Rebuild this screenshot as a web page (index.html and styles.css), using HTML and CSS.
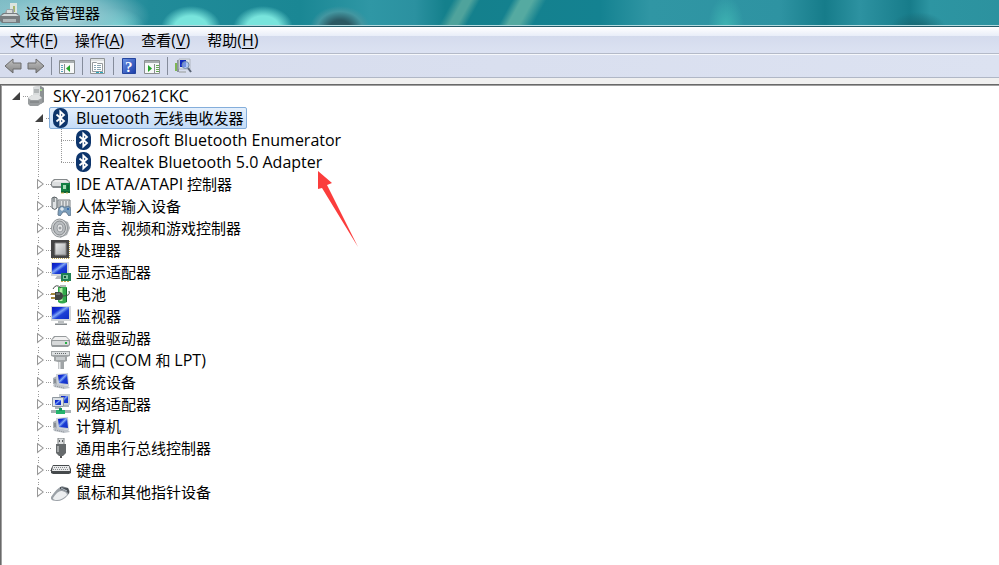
FILE: index.html
```html
<!DOCTYPE html>
<html lang="zh-CN">
<head>
<meta charset="utf-8">
<title>设备管理器</title>
<link rel="stylesheet" href="styles.css">
</head>
<body>
<svg class="sprite" aria-hidden="true">
  <defs>
    <linearGradient id="screen" x1="0" y1="0" x2="1" y2="1"><stop offset="0" stop-color="#0716b8"/><stop offset=".3" stop-color="#1534d8"/><stop offset=".45" stop-color="#7fa4f4"/><stop offset=".6" stop-color="#1c3fd6"/><stop offset="1" stop-color="#0f2bc4"/></linearGradient>
    <linearGradient id="metal" x1="0" y1="0" x2="1" y2="1"><stop offset="0" stop-color="#f0f1f1"/><stop offset="1" stop-color="#a4a7a9"/></linearGradient>
    <linearGradient id="arrow" x1="0" y1="0" x2="0" y2="1"><stop offset="0" stop-color="#c2c2c2"/><stop offset="1" stop-color="#848484"/></linearGradient>
    <linearGradient id="help" x1="0" y1="0" x2="1" y2="1"><stop offset="0" stop-color="#6d94e6"/><stop offset="1" stop-color="#1b3ca8"/></linearGradient>
    <symbol id="i-bt" viewBox="0 0 20 20"><rect x="2" y="0" width="15" height="20" rx="7" fill="#0d356c"/><path d="M5.500 6.500 13 13l-3.700 3.500v-13L13 7l-7.500 6.500" fill="none" stroke="#fff" stroke-width="1.800"/></symbol>
    <symbol id="i-pc" viewBox="0 0 20 20"><path d="M5 1l8-1 3 2v14l-3 2H6z" fill="#a9adaf"/><path d="M5 1l7-1v13H5z" fill="#d9dcdd"/><path d="M12 0l4 2v14l-4 2z" fill="#8c9193"/><path d="M6 4h5M6 6h5" stroke="#8b9092"/><circle cx="13" cy="4" r="1" fill="#aeea8a"/><path d="M0 12l4-3h7l3 3v5l-4 3H2l-2-2z" fill="#999d9f"/><path d="M0 12l4-3h7l3 3-4 2H3z" fill="#e1e3e4"/><path d="M2 16h9" stroke="#777b7d"/></symbol>
    <symbol id="i-ide" viewBox="0 0 20 20"><path d="M0 8l3-3h13l3 3v4l-2 2H2l-2-2z" fill="#85898b"/><path d="M1 8l3-2h11l3 2z" fill="#ececec"/><rect x="1" y="8" width="17" height="4" rx="1" fill="#dcdedf"/><path d="M10 9h9v10h-9z" fill="#158044"/><path d="M12 11h3v4h-3z" fill="#a5ddb5"/><path d="M10 18h9M17 11v5" stroke="#0b4f27"/><path d="M10 19h3m2 0h2" stroke="#d1b64f"/></symbol>
    <symbol id="i-hid" viewBox="0 0 20 20"><path d="M1 2q2-2 5 0v10q-2 3-5 0z" fill="#e0e3e4" stroke="#596064"/><path d="M3 1v5" stroke="#4f565a"/><path d="M7 4h12v8H7z" fill="#e2e4e6" stroke="#777c80"/><path d="M8 6h10M8 8h10M8 10h10" stroke="#777c80" stroke-dasharray="2 1"/><path d="M7 19q0-9 4-9l2 1h2l2-1q4 1 3 9l-2 1-3-4h-3l-3 4z" fill="#7b9ebc" stroke="#657b90"/><path d="M9 13h4m-2-2v4" stroke="#fff"/><circle cx="17" cy="13" r="1" fill="#275eae"/></symbol>
    <symbol id="i-sound" viewBox="0 0 20 20"><path d="M10 1l7 3 2 6-3 7-7 3z" fill="#aeb2b5"/><ellipse cx="8.500" cy="10" rx="8" ry="9" fill="#d4d6d8" stroke="#909598"/><ellipse cx="8.500" cy="10" rx="6" ry="7" fill="#b9bdc0" stroke="#85898c"/><ellipse cx="9" cy="10" rx="3" ry="4" fill="#e6e7e8" stroke="#989ca0"/><circle cx="9" cy="10" r="1.500" fill="#9a9fa3"/></symbol>
    <symbol id="i-cpu" viewBox="0 0 20 20"><path d="M0 0h18v18H0z" fill="#454545"/><path d="M1 18.500h18M18.500 1v17" stroke="#bba554" stroke-dasharray="1 1"/><path d="M4 3h11v12H4z" fill="url(#metal)" stroke="#8a8a8a"/></symbol>
    <symbol id="i-monitor" viewBox="0 0 20 20"><path d="M0 0h20v15H0z" fill="#d3d6d8"/><path d="M1 1h17v12H1z" fill="url(#screen)"/><path d="M7 15h6v2h3v2H4v-2h3z" fill="#bbbfc1"/><path d="M4 18.500h12" stroke="#858a8d"/></symbol>
    <symbol id="i-display" viewBox="0 0 20 20"><path d="M0 0h18v14H0z" fill="#d3d6d8"/><path d="M1 1h15v11H1z" fill="url(#screen)"/><path d="M6 14h5v3H4z" fill="#b7babd"/><path d="M10 11h10v8H10z" fill="#208055"/><path d="M12 13h5v4h-5z" fill="#80c8a2"/><path d="M13 14h2v2h-2z" fill="#15533c"/><path d="M10 19.500h9" stroke="#caac50" stroke-dasharray="2 1"/></symbol>
    <symbol id="i-battery" viewBox="0 0 20 20"><path d="M7 3h9v15q-5 3-9 0z" fill="#33a94b"/><path d="M10 4v13" stroke="#b5f1a5" stroke-width="3"/><path d="M9 2h6" stroke="#b4b9b7" stroke-width="2"/><path d="M15.500 4v14" stroke="#126a27"/><path d="M2 5q3-6 8-1M12 12q8 0 6-5" fill="none" stroke="#454b47"/><path d="M4 8h4q4 0 4 4t-4 4H4z" fill="#3f4442"/><path d="M5 10h4" stroke="#8f9491"/><path d="M0 10h4M0 14h4" stroke="#a3883e" stroke-width="2"/></symbol>
    <symbol id="i-disk" viewBox="0 0 20 20"><path d="M0 12l3-4h12l4 4v5l-2 2H1l-1-2z" fill="#969a9c"/><path d="M1 12l3-3h11l3 3z" fill="#f0f0f0"/><rect x="1" y="13" width="17" height="4" rx="1" fill="#d7d9da"/><path d="M14 14h2v2h-2z" fill="#23ae43"/></symbol>
    <symbol id="i-port" viewBox="0 0 20 20"><path d="M0 1h19v5l-3 1v4l-3 1v7H7v-7l-4-1V7L0 6z" fill="#a0a4a6"/><path d="M1 2h17v3H1z" fill="#dcdfe0"/><path d="M4 3.500h11" stroke="#62676a" stroke-dasharray="1 1"/><path d="M5 7h9v3H5z" fill="#c7cbcd"/><path d="M8.500 12v7" stroke="#e7e9ea" stroke-width="2"/></symbol>
    <symbol id="i-system" viewBox="0 0 20 20"><path d="M2 6l4-2v10l-4-2z" fill="#aab0b6"/><path d="M4 7v4" stroke="#676d73"/><path d="M5 2l12-1 1 13-12-2z" fill="#cbd0d6"/><path d="M7 3l9-1 1 10-9-1z" fill="url(#screen)"/><path d="M2 13l5-1 10 2 2 2-6 1-10-2z" fill="#c0c5cb"/><path d="M4 14l9 2" stroke="#8d9298" stroke-dasharray="1 1"/></symbol>
    <symbol id="i-net" viewBox="0 0 20 20"><path d="M8 0h11v11H8z" fill="#c5cbd2"/><path d="M10 2h7v7h-7z" fill="url(#screen)"/><path d="M1.500 3.500h11v9h-11z" fill="#dce1e6" stroke="#90989f"/><path d="M4 6h6v5H4z" fill="url(#screen)"/><path d="M4 13h6v2H4zM13 11h5v2h-5z" fill="#aeb4bb"/><path d="M0 17.500h20" stroke="#a8b1b5" stroke-width="3"/><path d="M5 16h9v4H5z" fill="#25b36d"/><path d="M8 14h3v3H8z" fill="#19905a"/></symbol>
    <symbol id="i-usb" viewBox="0 0 20 20"><path d="M7 0h6v7H7z" fill="#dddfe0" stroke="#7d8183"/><path d="M8 3h1m2 0h1" stroke="#565a5c" stroke-width="2"/><path d="M5 6h10v9l-3 3H8l-3-3z" fill="#666a6c"/><path d="M7 8v6" stroke="#a4a7a8" stroke-width="2"/><path d="M10 18v2" stroke="#555" stroke-width="2"/></symbol>
    <symbol id="i-kbd" viewBox="0 0 20 20"><path d="M2 5h16l2 4v4l-2 1H2l-2-1V9z" fill="#464a4c"/><path d="M2 6h16l1 5H1z" fill="#e9eaeb"/><path d="M3 7.500h14M2 9.500h16" stroke="#85898c" stroke-dasharray="1 1"/></symbol>
    <symbol id="i-mouse" viewBox="0 0 20 20"><path d="M0 15Q6 6 11 4l6 2q3 4 0 7-5 6-11 6-7 0-6-4z" fill="#9ba1a7"/><path d="M2 16Q7 8 11 9q5 1 5 4-5 5-10 5-4 0-4-2z" fill="#eceef0"/><path d="M9 5l8 1q2 3 1 6-3-4-9-5z" fill="#4a5056"/><path d="M10 6l6 3" stroke="#bcc6d0"/></symbol>
    <symbol id="i-back" viewBox="0 0 18 18"><path d="M1 9l8-7v4h8v6H9v4z" fill="url(#arrow)" stroke="#6c6c6c"/></symbol>
    <symbol id="i-tree" viewBox="0 0 18 18"><path d="M1.500 3.500h15v13h-15z" fill="#f7f8f8" stroke="#8a8e90"/><path d="M2 5h14" stroke="#a8adaf" stroke-width="2"/><path d="M6.500 7v9" stroke="#8a8e90"/><path d="M3 8.500h2M3 10.500h2M3 12.500h2M3 14.500h2" stroke="#5ba0bc"/><path d="M12 8v7l-4-3.500z" fill="#24a52a"/></symbol>
    <symbol id="i-action" viewBox="0 0 18 18"><path d="M1.500 3.500h15v13h-15z" fill="#f7f8f8" stroke="#8a8e90"/><path d="M2 5h14" stroke="#a8adaf" stroke-width="2"/><path d="M11.500 7v9" stroke="#8a8e90"/><path d="M13 8.500h3M13 10.500h3M13 12.500h3M13 14.500h3" stroke="#65aa52"/><path d="M5 8v7l4-3.500z" fill="#24a52a"/></symbol>
    <symbol id="i-props" viewBox="0 0 18 18"><path d="M1.500 1.500h14v15h-14z" fill="#f6f7f7" stroke="#909496"/><path d="M2 3h13" stroke="#c5cacc"/><path d="M3.500 5.500h4l1 1h5v8h-10z" fill="#fff" stroke="#969a9d"/><path d="M5 8.500h2m1 0h4M5 10.500h2m1 0h4M5 12.500h2m1 0h4" stroke="#8aa5b2"/><path d="M7 15.500h3m1 0h3" stroke="#2aabc1"/></symbol>
    <symbol id="i-scan" viewBox="0 0 18 18"><path d="M1 6h2v8H1z" fill="#7eb653"/><path d="M3 3h2v12H3z" fill="#8c939c"/><path d="M5 2h11v10H5z" fill="#dde2e9" stroke="#b1b8c2"/><path d="M6 3h6v7H6z" fill="#112bbd"/><circle cx="11.500" cy="8" r="3.500" fill="#9dbcf5" fill-opacity=".7" stroke="#728dac"/><path d="M14 11l3 4" stroke="#596474" stroke-width="2"/><path d="M5 14h7v2H5z" fill="#b7bcc3"/></symbol>
  </defs>
</svg>

<header class="titlebar">
  <svg class="app-icon" viewBox="0 0 20 22" aria-hidden="true"><path d="M10 1h7v14h-7z" fill="#dce4df"/><path d="M13 4h2v6h-2z" fill="#a6b56c"/><path d="M4 12l3-5h7v5" fill="#9fa5a8"/><path d="M7 8h5v3H7z" fill="#d9dddd"/><path d="M0 14l3-3h14l3 3v7H2l-2-2z" fill="#777d80"/><path d="M1 14l3-2h12l3 2z" fill="#d3d8d9"/><path d="M3 17h13v3H3z" fill="#b1b7b9"/></svg>
  <h1 class="title">设备管理器</h1>
</header>

<nav class="menubar" aria-label="菜单">
  <button class="menu">文件<span class="latin">(<u>F</u>)</span></button>
  <button class="menu">操作<span class="latin">(<u>A</u>)</span></button>
  <button class="menu">查看<span class="latin">(<u>V</u>)</span></button>
  <button class="menu">帮助<span class="latin">(<u>H</u>)</span></button>
</nav>

<div class="toolbar" role="toolbar" aria-label="工具栏">
  <button class="tool" aria-label="后退"><svg><use href="#i-back"/></svg></button>
  <button class="tool" aria-label="前进"><svg class="flip"><use href="#i-back"/></svg></button>
  <span class="sep"></span>
  <button class="tool" aria-label="控制台树"><svg><use href="#i-tree"/></svg></button>
  <span class="sep"></span>
  <button class="tool" aria-label="属性"><svg><use href="#i-props"/></svg></button>
  <span class="sep"></span>
  <button class="tool" aria-label="帮助"><svg viewBox="0 0 18 18"><path d="M2.500 1.500h13v15h-13z" fill="url(#help)" stroke="#24459e"/><text class="help-mark" x="5" y="15">?</text></svg></button>
  <button class="tool" aria-label="操作窗格"><svg><use href="#i-action"/></svg></button>
  <span class="sep"></span>
  <button class="tool" aria-label="扫描检测硬件改动"><svg><use href="#i-scan"/></svg></button>
</div>

<main class="pane">
  <ul class="tree">
    <li>
      <div class="row"><button class="toggle open" aria-label="折叠"></button><span class="node"><svg><use href="#i-pc"/></svg><span class="latin">SKY-20170621CKC</span></span></div>
      <ul class="level">
        <li>
          <div class="row"><button class="toggle open" aria-label="折叠"></button><span class="node selected"><svg><use href="#i-bt"/></svg><span><span class="latin">Bluetooth</span> 无线电收发器</span></span></div>
          <ul class="level piped">
            <li class="row"><span class="branch"></span><span class="node"><svg><use href="#i-bt"/></svg><span class="latin">Microsoft Bluetooth Enumerator</span></span></li>
            <li class="row"><span class="branch last"></span><span class="node target"><svg><use href="#i-bt"/></svg><span class="latin">Realtek Bluetooth 5.0 Adapter</span>
              <svg class="pointer" viewBox="0 0 42 78" aria-hidden="true"><path d="M1 0l14 12-5 2 31 62L5 17l-4 1z" fill="#fb3d3c"/></svg></span></li>
          </ul>
        </li>
        <li class="row"><button class="toggle" aria-label="展开"></button><span class="node"><svg><use href="#i-ide"/></svg><span><span class="latin">IDE ATA/ATAPI</span> 控制器</span></span></li>
        <li class="row"><button class="toggle" aria-label="展开"></button><span class="node"><svg><use href="#i-hid"/></svg>人体学输入设备</span></li>
        <li class="row"><button class="toggle" aria-label="展开"></button><span class="node"><svg><use href="#i-sound"/></svg>声音、视频和游戏控制器</span></li>
        <li class="row"><button class="toggle" aria-label="展开"></button><span class="node"><svg><use href="#i-cpu"/></svg>处理器</span></li>
        <li class="row"><button class="toggle" aria-label="展开"></button><span class="node"><svg><use href="#i-display"/></svg>显示适配器</span></li>
        <li class="row"><button class="toggle" aria-label="展开"></button><span class="node"><svg><use href="#i-battery"/></svg>电池</span></li>
        <li class="row"><button class="toggle" aria-label="展开"></button><span class="node"><svg><use href="#i-monitor"/></svg>监视器</span></li>
        <li class="row"><button class="toggle" aria-label="展开"></button><span class="node"><svg><use href="#i-disk"/></svg>磁盘驱动器</span></li>
        <li class="row"><button class="toggle" aria-label="展开"></button><span class="node"><svg><use href="#i-port"/></svg><span>端口 <span class="latin">(COM</span> 和 <span class="latin">LPT)</span></span></span></li>
        <li class="row"><button class="toggle" aria-label="展开"></button><span class="node"><svg><use href="#i-system"/></svg>系统设备</span></li>
        <li class="row"><button class="toggle" aria-label="展开"></button><span class="node"><svg><use href="#i-net"/></svg>网络适配器</span></li>
        <li class="row"><button class="toggle" aria-label="展开"></button><span class="node"><svg><use href="#i-system"/></svg>计算机</span></li>
        <li class="row"><button class="toggle" aria-label="展开"></button><span class="node"><svg><use href="#i-usb"/></svg>通用串行总线控制器</span></li>
        <li class="row"><button class="toggle" aria-label="展开"></button><span class="node"><svg><use href="#i-kbd"/></svg>键盘</span></li>
        <li class="row"><button class="toggle end" aria-label="展开"></button><span class="node"><svg><use href="#i-mouse"/></svg>鼠标和其他指针设备</span></li>
      </ul>
    </li>
  </ul>
</main>
</body>
</html>
```
FILE: styles.css
```css
* { box-sizing: border-box; }

body {
  margin: 0;
  min-height: 100vh;
  display: flex;
  flex-direction: column;
  background: #f0f0f0;
  color: #000;
  font: 15px/20px "Noto Sans", "Noto Sans CJK SC", sans-serif;
}

button {
  margin: 0;
  padding: 0;
  border: 0;
  background: none;
  color: inherit;
  font: inherit;
}

.latin { font-family: "Open Sans", "Noto Sans", sans-serif; font-size: 16px; }

.sprite { position: absolute; width: 0; height: 0; }

.titlebar {
  display: flex;
  align-items: center;
  gap: 5px;
  height: 27px;
  border-bottom: 1px solid #245b69;
  box-shadow: inset 0 -1px #b5dce0;
  background:
    radial-gradient(ellipse 90px 32px at 60px 16px, #b5dadf, #8fc8d0aa 60%, transparent),
    radial-gradient(ellipse 30px 20px at 115px 28px, #6fe0da, transparent),
    radial-gradient(ellipse 30px 22px at 191px 28px, #78e4dc 55%, transparent),
    radial-gradient(ellipse 30px 22px at 263px 28px, #78e4dc 55%, transparent),
    radial-gradient(ellipse 30px 22px at 340px 28px, #2b5862 35%, #4396a0 75%, transparent),
    radial-gradient(ellipse 18px 32px at 726px 28px, #3fb5b3, transparent),
    radial-gradient(ellipse 28px 16px at 918px 28px, #186570, transparent),
    linear-gradient(119deg, transparent 396px, #4fa39c 405px, #4fa39c 412px, transparent 420px, transparent 448px, #55aaa1 456px, #55aaa1 466px, transparent 478px),
    linear-gradient(90deg, #79b7c1, #218b99 150px, #1a8794 300px, #2f97a5 370px, #2b91a0 415px, #14808c 445px, #148291 600px, #3096a4 650px, #2e93a2 780px, #167c8a 825px, #2d92a1 860px, #177c8a 910px, #2d95a2 930px, #2c929f);
}

.app-icon { width: 20px; height: 22px; }
.title { margin: 0; font-size: 15px; font-weight: 400; }

.menubar {
  display: flex;
  align-items: center;
  gap: 17px;
  height: 27px;
  padding: 0 10px;
  border-bottom: 1px solid #b4bac8;
  background: linear-gradient(#fff, #e8edf8 35%, #d4dbed 36%, #dce2f2);
}

.menu u { text-underline-offset: 2px; text-decoration-thickness: 1px; }

.toolbar {
  display: flex;
  align-items: center;
  gap: 5px;
  height: 24px;
  padding: 0 4px;
  border-top: 1px solid #f6f8fc;
  border-bottom: 1px solid #b0b7c6;
  background: linear-gradient(90deg, #d6dced, #dce2f1);
}

.tool, .tool svg { display: block; width: 18px; height: 18px; }
.flip { transform: scaleX(-1); }
.sep { width: 1px; height: 18px; margin: 0 1px; background: #858c9b; }
.help-mark { font: 700 15px "Liberation Serif", serif; fill: #fff; }

.pane {
  flex: 1;
  margin-top: 6px;
  border: solid #696969;
  border-width: 1px 0 0 1px;
  box-shadow: inset 1px 1px #a0a0a0;
  padding: 0 0 0 4px;
  background: #fff;
}

.tree, .tree ul { margin: 0; padding: 0; list-style: none; }
.tree .level { padding-left: 23px; }
.tree .piped { background: repeating-linear-gradient(#999 0 1px, transparent 1px 2px) 10px 0 / 1px 100% no-repeat; }

.row { display: flex; align-items: center; height: 22px; }

.toggle {
  flex: none;
  width: 23px;
  height: 22px;
  background:
    repeating-linear-gradient(90deg, #999 0 1px, transparent 1px 2px) 18px 11px / 5px 1px no-repeat,
    linear-gradient(#999, #999) 10px 1px / 1px 1px no-repeat,
    linear-gradient(#999, #999) 10px 3px / 1px 1px no-repeat,
    linear-gradient(#999, #999) 10px 20px / 1px 1px no-repeat;
}

.toggle::before {
  content: "";
  display: block;
  width: 7px;
  height: 11px;
  margin-left: 9px;
  background: #999;
  clip-path: polygon(0 0, 100% 50%, 0 100%, 0 9%, 1px 20%, 1px 80%, 78% 50%, 1px 20%, 0 9%);
}

.toggle.end { background-size: 5px 1px, 1px 1px, 1px 1px, 0 0; }
.toggle.open { background-size: 5px 1px, 0 0, 0 0, 0 0; }
.toggle.open::before {
  width: 8px;
  height: 8px;
  margin-left: 7px;
  background: #404040;
  clip-path: polygon(100% 0, 100% 100%, 0 100%);
}

.branch {
  flex: none;
  width: 23px;
  height: 22px;
  background:
    repeating-linear-gradient(#999 0 1px, transparent 1px 2px) 10px 0 / 1px 100% no-repeat,
    repeating-linear-gradient(90deg, #999 0 1px, transparent 1px 2px) 10px 11px / 13px 1px no-repeat;
}

.branch.last { background-size: 1px 12px, 13px 1px; }

.node {
  display: flex;
  align-items: center;
  gap: 5px;
  height: 22px;
  margin-left: -2px;
  padding: 0 2px 0 1px;
  border: 1px solid transparent;
  border-radius: 2px;
  white-space: nowrap;
}

.node svg { flex: none; width: 20px; height: 20px; }

.selected {
  border-color: #84aedb;
  background: linear-gradient(#e4effc, #c4dcf8);
}

.target { position: relative; }
.node .pointer { position: absolute; top: 19px; right: -35px; width: 42px; height: 78px; }
```
